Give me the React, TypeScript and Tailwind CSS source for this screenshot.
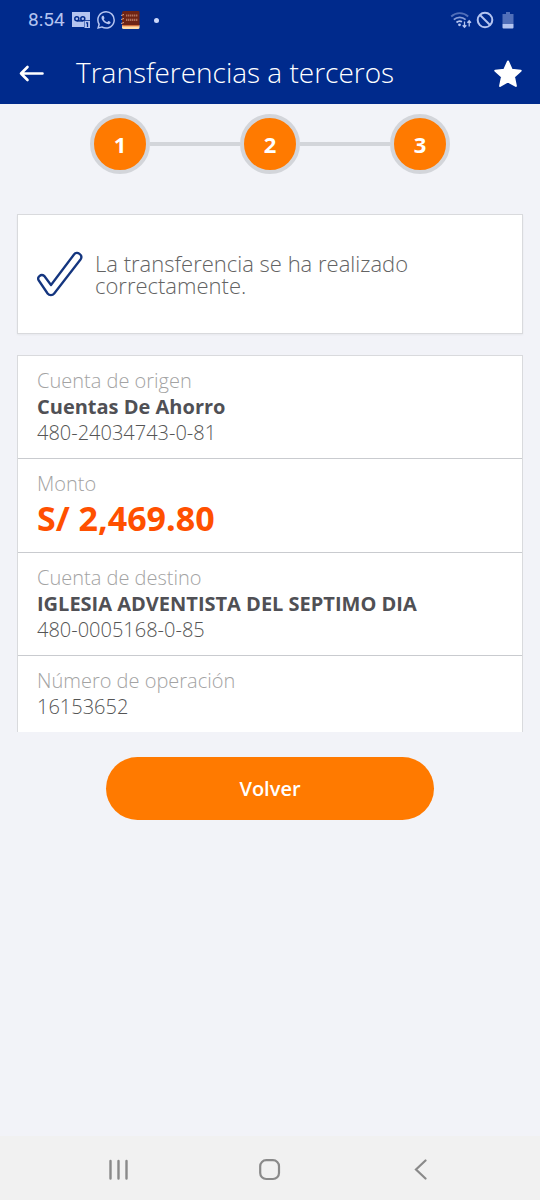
import type { ReactNode } from "react"

const steps = [1, 2, 3]

function StatusBar() {
  return (
    <div className="flex h-10 items-center justify-between pl-7 pr-[26px] text-[#b4c4f0]">
      <div className="flex items-center gap-[6px]">
        <span className="w-[38px] font-['Roboto',sans-serif] text-[19px] leading-6">8:54</span>
        {/* Voicemail */}
        <svg width="19" height="16" viewBox="0 0 19 16" aria-hidden="true">
          <path d="M0 0h18v8h-6v7H0z" fill="currentColor" />
          <g fill="none" stroke="#002a8c" strokeWidth="1.5">
            <circle cx="4.800" cy="6.800" r="2" />
            <circle cx="10.800" cy="6.800" r="2" />
            <path d="M4.800 8.900h6" />
          </g>
          <path d="M12.500 8.800H18V16h-5.500z" fill="currentColor" />
          <path d="M14 10.800h1.500V15" fill="none" stroke="#002a8c" strokeWidth="1.300" />
        </svg>
        {/* WhatsApp */}
        <svg width="18" height="18" viewBox="0 0 24 24" fill="currentColor" aria-hidden="true">
          <path d="M17.472 14.382c-.297-.149-1.758-.867-2.03-.967-.273-.099-.471-.148-.67.15-.197.297-.767.966-.94 1.164-.173.199-.347.223-.644.075-.297-.15-1.255-.463-2.39-1.475-.883-.788-1.48-1.761-1.653-2.059-.173-.297-.018-.458.13-.606.134-.133.298-.347.446-.52.149-.174.198-.298.298-.497.099-.198.05-.371-.025-.52-.075-.149-.669-1.612-.916-2.207-.242-.579-.487-.5-.669-.51-.173-.008-.371-.01-.57-.01-.198 0-.52.074-.792.372-.272.297-1.04 1.016-1.04 2.479 0 1.462 1.065 2.875 1.213 3.074.149.198 2.096 3.2 5.077 4.487.709.306 1.262.489 1.694.625.712.227 1.36.195 1.871.118.571-.085 1.758-.719 2.006-1.413.248-.694.248-1.289.173-1.413-.074-.124-.272-.198-.57-.347m-5.421 7.403h-.004a9.87 9.87 0 01-5.031-1.378l-.361-.214-3.741.982.998-3.648-.235-.374a9.86 9.86 0 01-1.51-5.26c.001-5.45 4.436-9.884 9.888-9.884 2.64 0 5.122 1.03 6.988 2.898a9.825 9.825 0 012.893 6.994c-.003 5.45-4.437 9.884-9.885 9.884m8.413-18.297A11.815 11.815 0 0012.05 0C5.495 0 .16 5.335.157 11.892c0 2.096.547 4.142 1.588 5.945L.057 24l6.305-1.654a11.882 11.882 0 005.683 1.448h.005c6.554 0 11.89-5.335 11.893-11.893a11.821 11.821 0 00-3.48-8.413z" />
        </svg>
        {/* Book app */}
        <svg width="19" height="18" viewBox="0 0 19 18" aria-hidden="true">
          <path d="M1 14h17.500v2.500A1.500 1.500 0 0 1 17 18H2.500A1.500 1.500 0 0 1 1 16.500z" fill="#ffdca8" />
          <path d="M3 0h14.500a1 1 0 0 1 1 1v13.500H3A2 2 0 0 1 1 12.500V2a2 2 0 0 1 2-2z" fill="#6e2415" />
          <path d="M1 14.800h17" stroke="#d9662c" strokeWidth="1" />
          <path d="M5 4.500h12M5 8.800h12" stroke="#b0705a" strokeWidth="2.200" strokeDasharray="1.400 .6" />
          <path d="M0 4.500l3-1M0 8.500l3-1M0 12.500l3-1" stroke="#d8a48c" strokeWidth="1" />
        </svg>
        <span className="ml-2 size-[5px] rounded-full bg-[#ccd8fa]" />
      </div>

      <div className="flex items-center gap-1">
        {/* Wifi with traffic arrows */}
        <svg width="22" height="18" viewBox="0 0 22 18" fill="none" stroke="currentColor" aria-hidden="true">
          <g strokeWidth="1.8">
            <path d="M1.200 5.500a12.500 12.500 0 0 1 17 0" opacity=".45" />
            <path d="M3.800 8.700a8.500 8.500 0 0 1 11.800 0" opacity=".75" />
            <path d="M6.500 11.500a5 5 0 0 1 5.500-.8" />
          </g>
          <circle cx="9.500" cy="13.800" r="1.400" fill="currentColor" stroke="none" />
          <path d="M14.500 10.500v5.500m-1.800-1.800l1.800 2 1.800-2M19.200 15.500V10m-1.800 1.800l1.800-2 1.800 2" strokeWidth="1.300" />
        </svg>
        {/* Blocked */}
        <svg width="18" height="18" viewBox="0 0 18 18" fill="none" stroke="currentColor" strokeWidth="2" aria-hidden="true">
          <circle cx="9" cy="9" r="7.300" />
          <path d="M4 4l10 10" />
        </svg>
        {/* Battery */}
        <svg className="ml-1" width="12" height="17" viewBox="0 0 12 17" fill="currentColor" aria-hidden="true">
          <path d="M4 0h4v2h3.500v10H.5V2H4z" opacity=".45" />
          <path d="M.5 12h11v3.500a1 1 0 0 1-1 1h-9a1 1 0 0 1-1-1z" />
        </svg>
      </div>
    </div>
  )
}

function Header() {
  return (
    <header className="bg-[#002a8c] text-white">
      <StatusBar />
      <div className="flex h-16 items-center pl-[19px] pr-[18px]">
        <button type="button" aria-label="Atrás" className="pt-1">
          <svg width="25" height="18" viewBox="0 0 25 18" fill="none" stroke="currentColor" strokeWidth="2.600" strokeLinecap="round" strokeLinejoin="round">
            <path d="M23.500 8.500H2M8.500 2L2 8.500 8.500 15" />
          </svg>
        </button>
        <h1 className="ml-8 flex-1 text-[28px] leading-8 font-light">Transferencias a terceros</h1>
        <button type="button" aria-label="Favorito" className="pt-1">
          <svg width="28" height="28" viewBox="0 0 28 28" fill="currentColor" stroke="currentColor" strokeWidth="2" strokeLinejoin="round">
            <path d="M14 1.500l3.700 8.200 9 1-6.700 6 1.900 9.300L14 21.500 6.100 26 8 16.700l-6.700-6 9-1z" />
          </svg>
        </button>
      </div>
    </header>
  )
}

function Stepper() {
  return (
    <ol className="mx-auto flex max-w-[360px] items-center">
      {steps.map((step) => (
        <li key={step} className="flex items-center not-first:flex-1">
          {step > 1 && <span className="h-1 flex-1 bg-[#d3d5da]" />}
          <span className="flex size-[60px] items-center justify-center rounded-full border-4 border-[#d3d5da] bg-[#ff7a00] text-[22px] font-bold text-white">
            {step}
          </span>
        </li>
      ))}
    </ol>
  )
}

function Row({ label, children }: { label: string; children: ReactNode }) {
  return (
    <div className="border-b border-[#c9cbcf] px-[19px] py-3 leading-[26px] last:border-b-0">
      <dt className="text-[20px] font-light text-[#a3a3a3]">{label}</dt>
      {children}
    </div>
  )
}

export default function App() {
  return (
    <div className="flex min-h-screen flex-col bg-[#f2f3f8] font-['Open_Sans',sans-serif]">
      <Header />

      <main className="flex-1 px-[17px] pt-[10px]">
        <Stepper />

        <section className="mt-10 flex min-h-[120px] items-center gap-3 border border-[#d9dadd] bg-white px-[19px] shadow-xs">
          <svg className="shrink-0" width="46" height="46" viewBox="0 0 46 46" fill="none" stroke="#14357f" strokeWidth="2.300" strokeLinejoin="round" aria-hidden="true">
            <path d="M1.800 29.500C-.3 26.500 3.800 22.300 7.300 25L14 34 37 3.500C40-.5 46.500 4 43.500 8.500L17.200 42.500C15.500 44.700 12.300 44.700 10.600 42.500z" />
          </svg>
          <p className="text-[22px] leading-[22px] font-light text-[#636363]">
            La transferencia se ha realizado correctamente.
          </p>
        </section>

        <dl className="mt-[21px] border border-b-0 border-[#d9dadd] bg-white">
          <Row label="Cuenta de origen">
            <dd className="text-[20px] font-bold text-[#505055]">Cuentas De Ahorro</dd>
            <dd className="text-[20px] font-light text-[#555555]">480-24034743-0-81</dd>
          </Row>
          <Row label="Monto">
            <dd className="text-[34px] leading-[43px] font-bold text-[#ff5000]">S/ 2,469.80</dd>
          </Row>
          <Row label="Cuenta de destino">
            <dd className="text-[20px] font-bold text-[#505055]">IGLESIA ADVENTISTA DEL SEPTIMO DIA</dd>
            <dd className="text-[20px] font-light text-[#555555]">480-0005168-0-85</dd>
          </Row>
          <Row label="Número de operación">
            <dd className="text-[20px] font-light text-[#555555]">16153652</dd>
          </Row>
        </dl>

        <button
          type="button"
          className="mx-auto mt-[25px] block h-[63px] w-[328px] rounded-full bg-[#ff7a00] text-[20px] font-semibold text-white"
        >
          Volver
        </button>
      </main>

      <nav className="flex h-16 items-center justify-around bg-[#f1f1f1] px-11 pt-1 text-[#8a8a8a]">
        <button type="button" aria-label="Recientes">
          <svg width="22" height="22" viewBox="0 0 22 22" stroke="currentColor" strokeWidth="2.400" strokeLinecap="round">
            <path d="M2.500 2v17.500M10.500 2v17.500M18.500 2v17.500" />
          </svg>
        </button>
        <button type="button" aria-label="Inicio">
          <svg width="22" height="22" viewBox="0 0 22 22" fill="none" stroke="currentColor" strokeWidth="2.200">
            <rect x="1.200" y="1.200" width="18.800" height="18.800" rx="6" />
          </svg>
        </button>
        <button type="button" aria-label="Volver atrás">
          <svg width="22" height="22" viewBox="0 0 22 22" fill="none" stroke="currentColor" strokeWidth="2.200" strokeLinecap="round">
            <path d="M15.500 1.500L6 10.500l9.500 9" />
          </svg>
        </button>
      </nav>
    </div>
  )
}
